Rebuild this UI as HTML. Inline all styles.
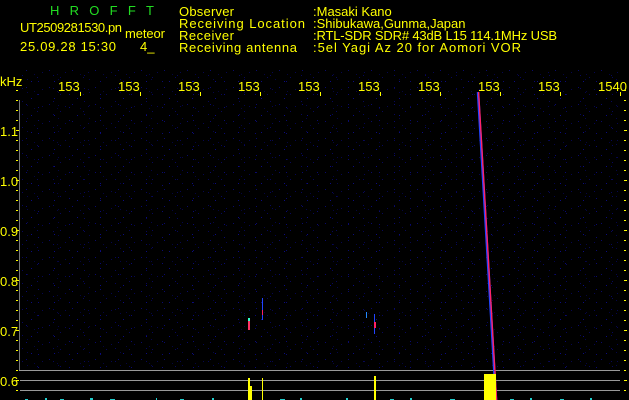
<!DOCTYPE html>
<html><head><meta charset="utf-8"><style>
html,body{margin:0;padding:0;background:#000;width:629px;height:400px;overflow:hidden}
svg{display:block}
text{font-family:"Liberation Sans",sans-serif;font-size:13px;fill:#ffff00}
</style></head><body>
<svg width="629" height="400" viewBox="0 0 629 400">
<defs>
<pattern id="n" width="23" height="17" patternUnits="userSpaceOnUse">
<rect x="3" y="2" width="1" height="1" fill="#0a0a6a"/>
<rect x="14" y="9" width="1" height="1" fill="#08085a"/>
<rect x="8" y="13" width="1" height="1" fill="#0c0c80"/>
<rect x="19" y="4" width="1" height="1" fill="#060650"/>
<rect x="11" y="6" width="1" height="1" fill="#050540"/>
</pattern>
<pattern id="n2" width="31" height="13" patternUnits="userSpaceOnUse">
<rect x="7" y="3" width="1" height="1" fill="#0a0a70"/>
<rect x="22" y="10" width="1" height="1" fill="#07075a"/>
<rect x="27" y="1" width="1" height="1" fill="#050548"/>
</pattern>
</defs>
<rect width="629" height="400" fill="#000"/>
<rect x="20" y="70" width="600" height="300" fill="url(#n)"/>
<rect x="20" y="70" width="600" height="300" fill="url(#n2)"/>
<!-- header -->
<text x="50" y="15" style="fill:#22dd22" textLength="104" lengthAdjust="spacing">HROFFT</text>
<text x="20" y="32" textLength="102">UT2509281530.pn</text>
<text x="125" y="38" textLength="40">meteor</text>
<text x="20" y="51" textLength="96">25.09.28 15:30</text>
<text x="140" y="51">4_</text>
<text x="179" y="16" textLength="55">Observer</text>
<text x="179" y="28" textLength="126">Receiving Location</text>
<text x="179" y="40" textLength="55">Receiver</text>
<text x="179" y="52" textLength="118">Receiving antenna</text>
<text x="313" y="16">:Masaki Kano</text>
<text x="313" y="28">:Shibukawa,Gunma,Japan</text>
<text x="313" y="40" textLength="244">:RTL-SDR SDR# 43dB L15 114.1MHz USB</text>
<text x="313" y="52" textLength="208">:5el Yagi Az 20 for Aomori VOR</text>
<!-- axis -->
<text x="0" y="86">kHz</text>
<svg x="58" y="76" width="22" height="20"><text x="0" y="15">1531</text></svg>
<svg x="118" y="76" width="22" height="20"><text x="0" y="15">1532</text></svg>
<svg x="178" y="76" width="22" height="20"><text x="0" y="15">1533</text></svg>
<svg x="238" y="76" width="22" height="20"><text x="0" y="15">1534</text></svg>
<svg x="298" y="76" width="22" height="20"><text x="0" y="15">1535</text></svg>
<svg x="358" y="76" width="22" height="20"><text x="0" y="15">1536</text></svg>
<svg x="418" y="76" width="22" height="20"><text x="0" y="15">1537</text></svg>
<svg x="478" y="76" width="22" height="20"><text x="0" y="15">1538</text></svg>
<svg x="538" y="76" width="22" height="20"><text x="0" y="15">1539</text></svg>
<text x="598" y="91">1540</text>
<g fill="#ffff00">
<rect x="80" y="92" width="1" height="4"/><rect x="140" y="92" width="1" height="4"/><rect x="200" y="92" width="1" height="4"/><rect x="260" y="92" width="1" height="4"/><rect x="320" y="92" width="1" height="4"/><rect x="380" y="92" width="1" height="4"/><rect x="440" y="92" width="1" height="4"/><rect x="500" y="92" width="1" height="4"/><rect x="560" y="92" width="1" height="4"/><rect x="620" y="92" width="1" height="4"/>
</g>
<g>
<text x="0" y="136">1.1</text><text x="0" y="186">1.0</text><text x="0" y="236">0.9</text><text x="0" y="286">0.8</text><text x="0" y="336">0.7</text><text x="0" y="386">0.6</text>
</g>
<g fill="#ffff00" id="lt">
<rect x="16" y="90" width="2" height="1"/><rect x="16" y="100" width="2" height="1"/><rect x="16" y="110" width="2" height="1"/><rect x="16" y="120" width="2" height="1"/><rect x="16" y="130" width="3" height="1"/><rect x="16" y="140" width="2" height="1"/><rect x="16" y="150" width="2" height="1"/><rect x="16" y="160" width="2" height="1"/><rect x="16" y="170" width="2" height="1"/><rect x="16" y="180" width="3" height="1"/><rect x="16" y="190" width="2" height="1"/><rect x="16" y="200" width="2" height="1"/><rect x="16" y="210" width="2" height="1"/><rect x="16" y="220" width="2" height="1"/><rect x="16" y="230" width="3" height="1"/><rect x="16" y="240" width="2" height="1"/><rect x="16" y="250" width="2" height="1"/><rect x="16" y="260" width="2" height="1"/><rect x="16" y="270" width="2" height="1"/><rect x="16" y="280" width="3" height="1"/><rect x="16" y="290" width="2" height="1"/><rect x="16" y="300" width="2" height="1"/><rect x="16" y="310" width="2" height="1"/><rect x="16" y="320" width="2" height="1"/><rect x="16" y="330" width="3" height="1"/><rect x="16" y="340" width="2" height="1"/><rect x="16" y="350" width="2" height="1"/><rect x="16" y="360" width="2" height="1"/><rect x="16" y="370" width="2" height="1"/><rect x="16" y="380" width="3" height="1"/><rect x="16" y="390" width="2" height="1"/>
</g>
<use href="#lt" x="608"/>
<!-- gray lines -->
<rect x="19" y="100" width="1" height="271" fill="#777"/>
<rect x="19" y="370" width="601" height="1" fill="#999"/>
<rect x="20" y="380" width="600" height="1" fill="#999"/>
<rect x="20" y="390" width="600" height="1" fill="#999"/>
<!-- meteor line -->
<line x1="478" y1="92" x2="496" y2="400" stroke="#2244ff" stroke-width="2.5"/>
<line x1="478.6" y1="92" x2="496.6" y2="400" stroke="#ff2266" stroke-width="1.4"/>
<!-- small pings -->
<rect x="248" y="320" width="2" height="10" fill="#ff3366"/><rect x="248" y="318" width="2" height="3" fill="#33ffcc"/>
<rect x="262" y="298" width="1" height="22" fill="#2244ff"/><rect x="262" y="310" width="1" height="5" fill="#ff2266"/>
<rect x="374" y="314" width="1" height="20" fill="#2244ff"/><rect x="374" y="322" width="2" height="6" fill="#ff2266"/>
<rect x="366" y="312" width="1" height="6" fill="#2288ff"/>
<!-- yellow bars -->
<rect x="484" y="374" width="12" height="26" fill="#ffff00"/>
<rect x="248" y="378" width="2" height="22" fill="#ffff00"/><rect x="250" y="386" width="2" height="14" fill="#ffff00"/>
<rect x="262" y="378" width="1" height="22" fill="#ffff00"/>
<rect x="374" y="376" width="2" height="24" fill="#ffff00"/>
<!-- cyan baseline noise -->
<g fill="#22cccc">
<rect x="25" y="399" width="3" height="1"/><rect x="45" y="398" width="2" height="2"/><rect x="60" y="399" width="4" height="1"/><rect x="90" y="398" width="3" height="2"/><rect x="110" y="399" width="5" height="1"/><rect x="156" y="398" width="1" height="2"/><rect x="180" y="399" width="4" height="1"/><rect x="212" y="398" width="2" height="2"/><rect x="280" y="399" width="5" height="1"/><rect x="300" y="398" width="2" height="2"/><rect x="346" y="398" width="2" height="2"/><rect x="390" y="399" width="4" height="1"/><rect x="410" y="398" width="2" height="2"/><rect x="450" y="399" width="5" height="1"/><rect x="510" y="399" width="4" height="1"/><rect x="530" y="398" width="2" height="2"/><rect x="560" y="399" width="4" height="1"/><rect x="590" y="398" width="2" height="2"/>
</g>
</svg>
</body></html>
